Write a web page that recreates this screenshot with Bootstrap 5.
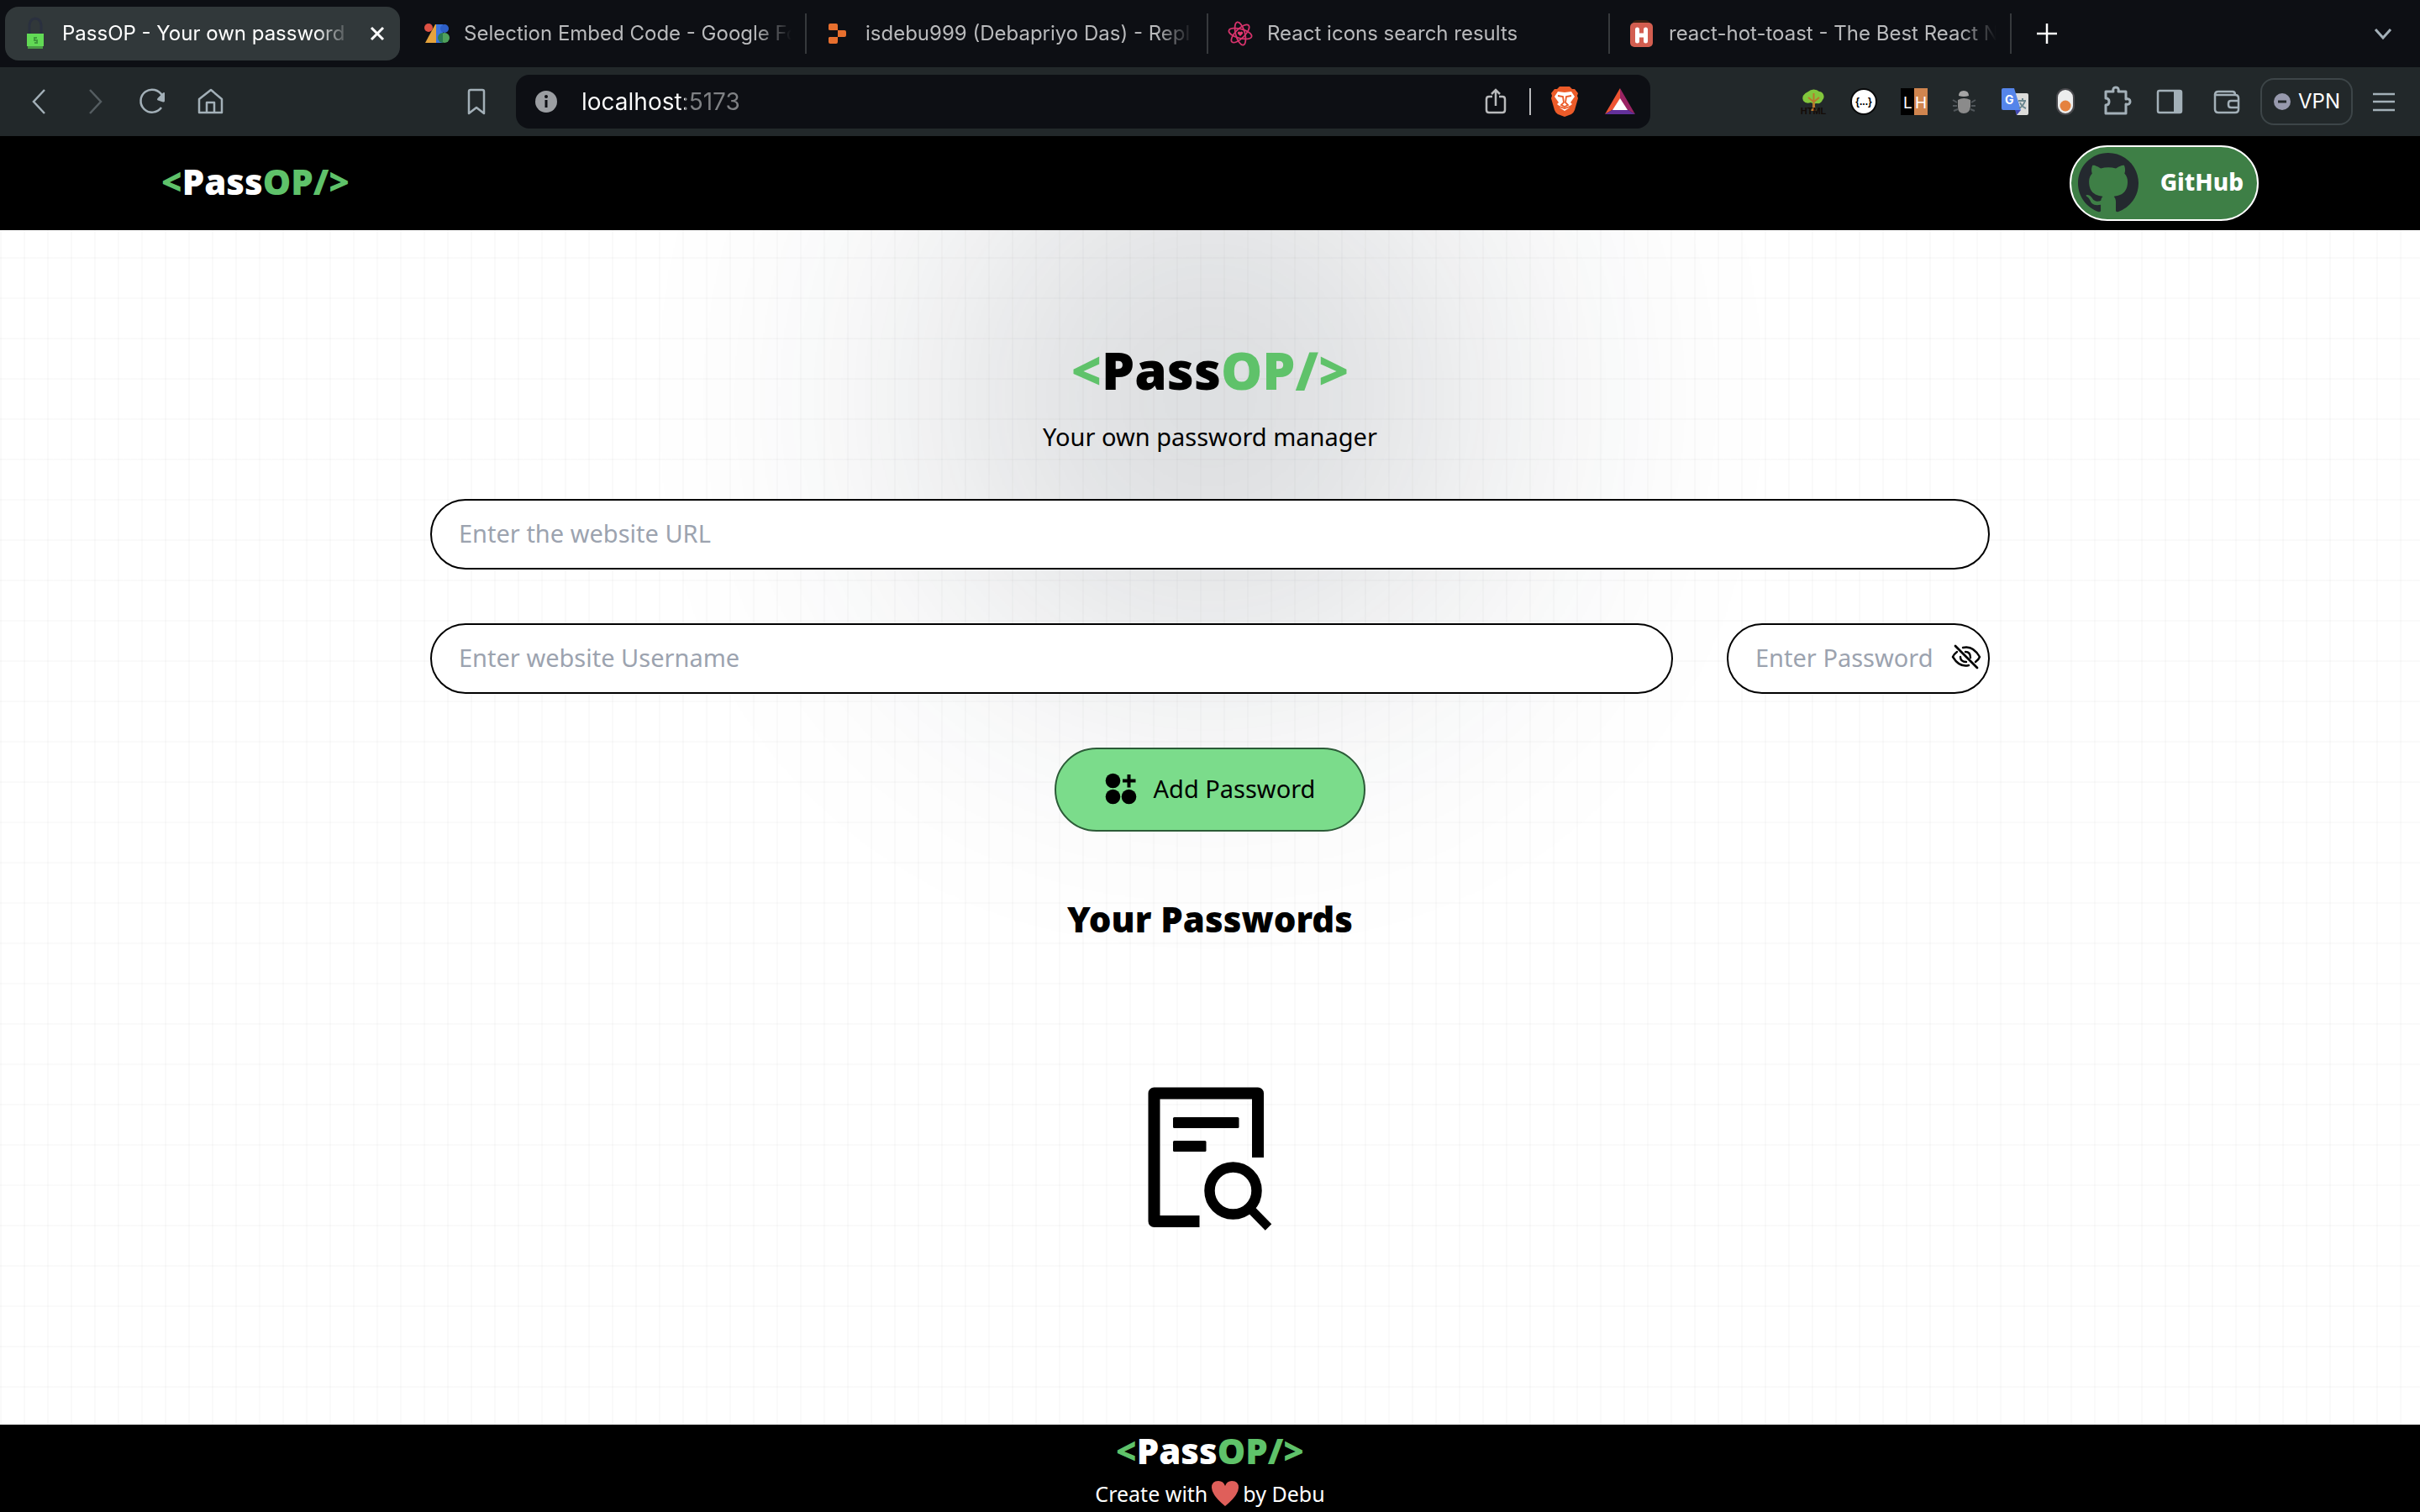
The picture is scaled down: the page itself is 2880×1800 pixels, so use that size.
<!DOCTYPE html>
<html lang="en">
<head>
<meta charset="utf-8">
<meta name="viewport" content="width=device-width, initial-scale=1">
<title>PassOP - Your own password manager</title>
<link href="https://cdn.jsdelivr.net/npm/bootstrap@5.3.0/dist/css/bootstrap.min.css" rel="stylesheet">
<style>
  :root { --leaf: #5fc26a; --ui: "Inter", "Liberation Sans", sans-serif; --brand: "Noto Sans", "Open Sans", sans-serif; }
  body { font-family: var(--brand); color: #000; background: #fff; }
  svg { display: block; flex: none; }
  button { border: 0; background: none; padding: 0; }

  /* browser tabs */
  .tabstrip { background: #0d0f14; height: 80px; padding: 0 32px 0 2px; font-family: var(--ui); font-size: 24px; }
  .tab-slot { width: 478px; padding: 8px 4px; position: relative; }
  .tab-slot a { height: 64px; padding: 0 12px 0 20px; gap: 16px; border-radius: 16px; color: #b9babc; text-decoration: none; }
  .tab-slot.is-open a { background: #31383a; color: #fff; }
  .tab-slot.ruled::after { content: ""; position: absolute; right: -2px; top: 16px; width: 2px; height: 48px; background: #36393c; }
  .tab-title { flex: 1 1 0; min-width: 0; overflow: hidden; white-space: nowrap; line-height: 36px;
    -webkit-mask-image: linear-gradient(to left, transparent, #000 44px); mask-image: linear-gradient(to left, transparent, #000 44px); }

  /* browser toolbar */
  .toolbar { background: #22282a; height: 82px; padding: 0 28px 0 30px; color: #a3b0b8; font-family: var(--ui); }
  .toolbar svg, .tabstrip svg { overflow: visible; }
  .nav-keys { gap: 36px; width: 552px; flex: none; }
  .address { margin-left: 32px; width: 1350px; height: 64px; border-radius: 16px; background: #0d0f14; padding: 0 18px 0 20px; }
  .address input { flex: 1; min-width: 0; border: 0; outline: 0; margin-left: 26px; padding: 0; font-size: 28px; line-height: 40px;
    background: linear-gradient(90deg, #fff 123px, #7f8184 123px); -webkit-background-clip: text; background-clip: text; color: transparent; }
  .address-rule { width: 2px; height: 32px; background: #b9babc; }
  .extensions { gap: 28px; }
  .vpn { height: 56px; width: 110px; border: 2px solid #3d4548; border-radius: 16px; color: #fff; font-size: 24px; gap: 8px; }

  /* page */
  .page { flex: 1; position: relative; overflow: hidden; background-color: #fff;
    background-image: linear-gradient(to right, #8080800a 2px, transparent 2px), linear-gradient(to bottom, #8080800a 2px, transparent 2px);
    background-size: 28px 48px; }
  .glow { position: absolute; top: 0; left: 0; right: 0; margin: 0 auto; width: 620px; height: 620px; border-radius: 50%; background: #1f2937; opacity: .2; filter: blur(200px); }
  .page > header, .page > main, .page > footer { position: relative; }
  .topbar { background: #000; height: 112px; padding: 0 192px; }
  .topbar .wordmark, .github span { padding-bottom: 4px; }
  .wordmark { font-weight: 900; font-size: 42px; line-height: 56px; color: #fff; text-decoration: none; white-space: nowrap; }
  .wordmark i { font-style: normal; color: var(--leaf); }
  .wordmark.hero { font-size: 62px; line-height: 80px; color: #000; }
  .github { height: 90px; border: 2px solid #fff; border-radius: 45px; background: #3e7f46; color: #fff; font-weight: 800; font-size: 28px; padding: 0 16px 0 8px; gap: 26px; }
  .vault { width: 100%; max-width: 1856px; padding-top: 126px; }
  .tagline { font-size: 29px; line-height: 40px; margin: 20px 0 54px; }
  .pill-input { height: 84px; border: 2px solid #000; border-radius: 42px; padding: 0 32px 4px; font-size: 29px; background: #fff; }
  .pill-input::placeholder { color: #9ca3af; opacity: 1; }
  .form-gap { gap: 64px; }
  .secret { width: 313px; position: relative; }
  .secret button { position: absolute; right: 10px; top: 22px; }
  .add { height: 100px; width: 370px; border: 2px solid #2c5b38; border-radius: 50px; background: #7bdc8b; color: #000; font-size: 29px; gap: 20px; line-height: 40px; padding-bottom: 2px; }
  .list-title { font-weight: 900; font-size: 42px; line-height: 56px; margin: 76px 0 172px; }
  .bottombar { background: #000; color: #fff; height: 104px; }
  .bottombar .wordmark { line-height: 62px; }
  .credit { font-size: 25px; line-height: 40px; gap: 4px; }
</style>
<script src="https://cdn.jsdelivr.net/npm/bootstrap@5.3.0/dist/js/bootstrap.bundle.min.js"></script>
</head>
<body class="d-flex flex-column min-vh-100">

<nav class="tabstrip d-flex align-items-center" aria-label="Tabs">
  <div class="tab-slot is-open">
    <a href="#" class="d-flex align-items-center">
      <svg width="32" height="52" viewBox="0 0 32 52"><path d="M9 26V16a7 8 0 0 1 14 0v10" fill="none" stroke="#2a303f" stroke-width="3"/><rect x="6" y="26" width="20" height="15" fill="#62da55"/><rect x="7" y="41" width="18" height="3" fill="#4a9a45"/><path d="M18 31h-3v3h3v3h-3" fill="none" stroke="#3f9c3c" stroke-width="2"/></svg>
      <span class="tab-title">PassOP - Your own password</span>
      <svg width="30" height="30" viewBox="0 0 30 30"><path d="M8 8l14 14M22 8L8 22" stroke="#fff" stroke-width="3"/></svg>
    </a>
  </div>
  <div class="tab-slot ruled">
    <a href="#" class="d-flex align-items-center">
      <svg width="32" height="32" viewBox="0 0 32 32"><circle cx="6" cy="9" r="5" fill="#dd5144"/><path d="M2 27L14 5h2v22z" fill="#e5a33c"/><path d="M15 5h8v22h-8z" fill="#3b74dd"/><circle cx="25" cy="10" r="5" fill="#2d5fc8"/><circle cx="25" cy="21" r="6" fill="#4fa25c"/><path d="M23 15a6 6 0 0 0 0 12z" fill="#2a7a52"/></svg>
      <span class="tab-title">Selection Embed Code - Google Fo</span>
    </a>
  </div>
  <div class="tab-slot ruled">
    <a href="#" class="d-flex align-items-center">
      <svg width="32" height="32" viewBox="0 0 32 32"><path d="M6 4h7q2 0 2 2v6H6q-2 0-2-1V6q0-2 2-2zM15 12h8q2 0 2 2v4q0 2-2 2h-8zM5 20h10v6q0 2-2 2H6q-2 0-2-2v-5z" fill="#e76f2e"/></svg>
      <span class="tab-title">isdebu999 (Debapriyo Das) - Repl</span>
    </a>
  </div>
  <div class="tab-slot ruled">
    <a href="#" class="d-flex align-items-center">
      <svg width="32" height="32" viewBox="0 0 32 32" fill="none" stroke="#d6336c" stroke-width="1.8"><ellipse cx="16" cy="16" rx="14" ry="5.500" transform="rotate(15 16 16)"/><ellipse cx="16" cy="16" rx="14" ry="5.500" transform="rotate(75 16 16)"/><ellipse cx="16" cy="16" rx="14" ry="5.500" transform="rotate(135 16 16)"/><path d="M16 19l-3-3a1.600 1.600 0 0 1 3-1.500A1.600 1.600 0 0 1 19 16z" fill="#e8386f" stroke="none"/></svg>
      <span class="tab-title">React icons search results</span>
    </a>
  </div>
  <div class="tab-slot ruled">
    <a href="#" class="d-flex align-items-center">
      <svg width="32" height="32" viewBox="0 0 32 32"><path d="M5 4q0-4 6-4h8q6 0 6 4z" fill="#3a2010"/><rect x="2" y="3" width="27" height="29" rx="5" fill="#d35e50"/><path d="M10.500 11v14M20.500 11v14M10.500 18h10" stroke="#fff" stroke-width="5" stroke-linecap="round"/></svg>
      <span class="tab-title">react-hot-toast - The Best React N</span>
    </a>
  </div>
  <button type="button" class="ms-4 ps-1" aria-label="New tab"><svg width="32" height="32" viewBox="0 0 32 32"><path d="M16 4v24M4 16h24" stroke="#fff" stroke-width="2.500"/></svg></button>
  <button type="button" class="ms-auto" aria-label="Search tabs"><svg width="24" height="24" viewBox="0 0 24 24"><path d="M3 7l9 10 9-10" fill="none" stroke="#a3b0b8" stroke-width="3"/></svg></button>
</nav>

<div class="toolbar d-flex align-items-center">
  <div class="nav-keys d-flex align-items-center">
    <button type="button" aria-label="Back"><svg width="32" height="32" viewBox="0 0 32 32"><path d="M23 2L10 16l13 14" fill="none" stroke="#a3b0b8" stroke-width="2.500"/></svg></button>
    <button type="button" aria-label="Forward"><svg width="32" height="32" viewBox="0 0 32 32"><path d="M9 2l13 14L9 30" fill="none" stroke="#555d61" stroke-width="2.500"/></svg></button>
    <button type="button" aria-label="Reload"><svg width="32" height="32" viewBox="0 0 32 32"><path d="M26 23A13.500 13.500 0 1 1 27 9" fill="none" stroke="#a3b0b8" stroke-width="2.500"/><path d="M30 6v9a1.500 1.500 0 0 1-2 1.500l-6-2q-2-1 0-3l6-6q2-1 2 .5z" fill="#a3b0b8"/></svg></button>
    <button type="button" aria-label="Home"><svg width="32" height="32" viewBox="0 0 32 32" fill="none" stroke="#a3b0b8" stroke-width="2.500" stroke-linejoin="round"><path d="M3 13L17 2l13 11v16H3z"/><path d="M12 29V17h9v12"/></svg></button>
    <button type="button" class="ms-auto" aria-label="Bookmark"><svg width="28" height="32" viewBox="0 0 28 32"><path d="M4 4q0-2 2-2h14q2 0 2 2v26l-9-7-9 7z" fill="none" stroke="#a3b0b8" stroke-width="2.500" stroke-linejoin="round"/></svg></button>
  </div>
  <div class="address d-flex align-items-center">
    <svg width="32" height="32" viewBox="0 0 32 32"><circle cx="16" cy="16" r="13" fill="#9b9ea2"/><path d="M16 14v9" stroke="#0d0f14" stroke-width="3"/><circle cx="16" cy="10" r="2" fill="#0d0f14"/></svg>
    <input type="text" value="localhost:5173" aria-label="Address">
    <div class="d-flex align-items-center gap-4">
      <svg width="32" height="32" viewBox="0 0 32 32" fill="none" stroke="#b9babc" stroke-width="2.500"><path d="M12 10H8q-3 0-3 3v13q0 3 3 3h16q3 0 3-3V13q0-3-3-3h-4M16 21V2M11 7l5-5 5 5"/></svg>
      <div class="address-rule"></div>
      <svg width="32" height="36" viewBox="0 0 32 36"><path d="M10 0h12l3 3h3l4 5-1 3 1 3-4 14q-1 3-4 5l-8 3-8-3q-3-2-4-5L0 14l1-3-1-3 4-5h3z" fill="#ec5b29"/><path d="M8 6l8 1 8-1 4 6-5 7 2 2-4 3 1 1-6 4-6-4 1-1-4-3 2-2-5-7z" fill="#fff"/><path d="M8 11l6 1 1 7-3 3 4 2 4-2-3-3 1-7 6-1M10 24l6 2 6-2" fill="none" stroke="#ec5b29" stroke-width="1.800"/></svg>
      <svg class="ms-2" width="36" height="32" viewBox="0 0 36 32"><path d="M18 0L0 31l10-6 8-12z" fill="#ee5433"/><path d="M18 0l18 31-10-6-8-12z" fill="#9a2464"/><path d="M0 31h36l-10-6H10z" fill="#63309a"/><path d="M18 12l9 14H9z" fill="#fff"/></svg>
    </div>
  </div>
  <div class="extensions d-flex align-items-center ms-auto">
    <svg width="32" height="32" viewBox="0 0 32 32"><path d="M15 12h3v10l2 5h-7l2-5z" fill="#b9762d"/><path d="M10 4a8 6 0 0 1 13 0 6 6 0 0 1 4 10q-2 5-7 4-4 1-7-1-6 2-9-2-3-7 6-11z" fill="#82c63c"/><path d="M16.500 6v20M16 16l-6-5M17 16l6-5" stroke="#b9762d" stroke-width="2"/><text x="16" y="31" text-anchor="middle" font-family="Liberation Sans, sans-serif" font-weight="700" font-size="11" fill="#140c08">HTML</text></svg>
    <svg width="32" height="32" viewBox="0 0 32 32"><circle cx="16" cy="16" r="15" fill="#fff" stroke="#08090a" stroke-width="2"/><text x="16" y="20" text-anchor="middle" font-family="Liberation Sans, sans-serif" font-weight="700" font-size="12">{...}</text></svg>
    <svg width="32" height="32" viewBox="0 0 32 32"><path d="M0 0h16v32H0z"/><path d="M16 0h16v32H16z" fill="#d0854f"/><text x="3" y="24" font-family="Inter, sans-serif" font-size="19" fill="#fff">L</text><text x="17" y="24" font-family="Inter, sans-serif" font-size="19" fill="#fff">H</text></svg>
    <svg width="32" height="32" viewBox="0 0 32 32"><path d="M9 9q0-6 6-6t6 6q-6 2-12 0z" fill="#a5a5a5"/><path d="M8 14q7-4 15 0v8q-1 8-8 8t-7-8z" fill="#8b8b8b"/><path d="M7 17l-5-3M7 21H2M8 25l-5 2M24 17l5-3M24 21h5M23 25l5 2" stroke="#50565a" stroke-width="2" fill="none"/></svg>
    <svg width="32" height="32" viewBox="0 0 32 32"><path d="M14 6h16q2 0 2 2v22q0 2-2 2H18z" fill="#dcdcda"/><path d="M16 26h7l-5 6z" fill="#3f46b0"/><path d="M2 0h13l8 26H2q-2 0-2-2V2q0-2 2-2z" fill="#5585ea"/><path d="M20 15h9M25 12v3M28 15q-2 6-7 9M22 17q2 5 7 7" stroke="#6b8790" stroke-width="2" fill="none"/><text x="4" y="19" font-family="Inter, sans-serif" font-weight="700" font-size="14" fill="#fff">G</text></svg>
    <svg width="32" height="32" viewBox="0 0 32 32"><rect x="6" y="1" width="20" height="30" rx="10" fill="#eceded" stroke="#4a4a4e" stroke-width="2"/><circle cx="16" cy="21" r="6.500" fill="#e5823f"/></svg>
    <svg width="36" height="36" viewBox="0 0 36 36"><path d="M4 6h9q-1-5 3-5t3 5h9v9q5-1 5 3t-5 3v11H4V22q4 0 4-4t-4-4z" fill="none" stroke="#a3b0b8" stroke-width="3" stroke-linejoin="round"/></svg>
    <svg width="32" height="32" viewBox="0 0 32 32"><rect x="2" y="3" width="28" height="26" rx="2" fill="none" stroke="#a3b0b8" stroke-width="2.500"/><path d="M21 3h9v26h-9z" fill="#a3b0b8"/></svg>
    <svg class="ms-2" width="32" height="32" viewBox="0 0 32 32" fill="none" stroke="#a3b0b8" stroke-width="2.500"><path d="M2 8q0-4 4-4h17q3 0 3 4M2 8v17q0 4 4 4h20q4 0 4-4V12q0-4-4-4z"/><path d="M30 15H21q-3 0-3 3v2q0 3 3 3h9"/></svg>
  </div>
  <button type="button" class="vpn d-flex align-items-center justify-content-center ms-4"><svg width="22" height="22" viewBox="0 0 22 22"><circle cx="11" cy="11" r="10" fill="#9799ad"/><path d="M6 11h10" stroke="#22282a" stroke-width="3"/></svg>VPN</button>
  <button type="button" class="ms-4" aria-label="Menu"><svg width="28" height="28" viewBox="0 0 28 28"><path d="M0 5h26M0 14h26M0 24h26" stroke="#a3b0b8" stroke-width="2.500"/></svg></button>
</div>

<div class="page d-flex flex-column">
  <div class="glow"></div>
  <header class="topbar d-flex align-items-center justify-content-between">
    <a href="#" class="wordmark"><i>&lt;</i>Pass<i>OP/&gt;</i></a>
    <button type="button" class="github d-flex align-items-center">
      <svg width="72" height="72" viewBox="0 0 16 16" fill="#24292f"><path d="M8 0C3.580 0 0 3.580 0 8c0 3.540 2.290 6.530 5.470 7.590.4.070.55-.17.55-.38 0-.19-.01-.82-.01-1.490-2.010.37-2.530-.49-2.690-.94-.09-.23-.48-.94-.82-1.130-.28-.15-.68-.52-.01-.53.63-.01 1.080.58 1.230.82.72 1.210 1.870.87 2.330.66.07-.52.28-.87.51-1.070-1.780-.2-3.640-.89-3.640-3.950 0-.87.31-1.590.82-2.150-.08-.2-.36-1.020.08-2.120 0 0 .67-.21 2.200.82.64-.18 1.320-.27 2-.27.68 0 1.360.09 2 .27 1.530-1.040 2.200-.82 2.200-.82.44 1.100.16 1.920.08 2.120.51.56.82 1.270.82 2.150 0 3.070-1.870 3.750-3.650 3.950.29.25.54.73.54 1.480 0 1.070-.01 1.930-.01 2.200 0 .21.15.46.55.38A8.012 8.012 0 0 0 16 8c0-4.420-3.580-8-8-8z"/></svg>
      <span>GitHub</span>
    </button>
  </header>

  <main class="vault mx-auto d-flex flex-column align-items-center">
    <h1 class="wordmark hero mb-0"><i>&lt;</i>Pass<i>OP/&gt;</i></h1>
    <p class="tagline">Your own password manager</p>
    <form class="form-gap w-100 d-flex flex-column align-items-center">
      <input type="text" class="pill-input w-100" placeholder="Enter the website URL" aria-label="Website URL">
      <div class="form-gap d-flex w-100">
        <input type="text" class="pill-input flex-grow-1" placeholder="Enter website Username" aria-label="Username">
        <div class="secret">
          <input type="password" class="pill-input w-100" placeholder="Enter Password" aria-label="Password">
          <button type="button" aria-label="Show password"><svg width="36" height="36" viewBox="0 0 36 36" fill="none" stroke="#000" stroke-width="2.400" stroke-linecap="round"><path d="M14 7q12-3 20 11-1 3-5 6M7 12q-4 3-5 6 8 13 19 10"/><path d="M17 12q6 0 6 7M11 18q0 6 7 6"/><path d="M5 5l26 26" stroke-width="2.800"/></svg></button>
        </div>
      </div>
      <button type="submit" class="add d-flex align-items-center justify-content-center"><svg width="38" height="38" viewBox="0 0 38 38"><circle cx="9.500" cy="9.500" r="8.800"/><circle cx="9.500" cy="28.500" r="8.800"/><circle cx="28.500" cy="28.500" r="8.800"/><path d="M28.500 2v15.500M21 9.500h15.500" stroke="#000" stroke-width="4"/></svg>Add Password</button>
    </form>
    <h2 class="list-title">Your Passwords</h2>
    <svg width="148" height="172" viewBox="46 32 148 172" role="img" aria-label="No passwords found"><path d="M177 116V39.500H53.500V192H107.500" fill="none" stroke="#000" stroke-width="14" stroke-linejoin="round"/><rect x="76" y="68" width="78.500" height="13" rx="1.500"/><rect x="76" y="96" width="39.500" height="13" rx="1.500"/><circle cx="147.500" cy="155.500" r="28" fill="none" stroke="#000" stroke-width="12.500"/><path d="M168 177l21.500 22" stroke="#000" stroke-width="10.500"/></svg>
  </main>

  <footer class="bottombar mt-auto d-flex flex-column align-items-center">
    <a href="#" class="wordmark"><i>&lt;</i>Pass<i>OP/&gt;</i></a>
    <div class="credit d-flex align-items-center">Create with<svg width="34" height="32" viewBox="0 0 34 32"><path d="M17 31Q1 18 1 9q0-8 8-8 6 0 8 6 2-6 8-6 8 0 8 8 0 9-16 22z" fill="#df5f5a"/></svg>by Debu</div>
  </footer>
</div>
</body>
</html>
